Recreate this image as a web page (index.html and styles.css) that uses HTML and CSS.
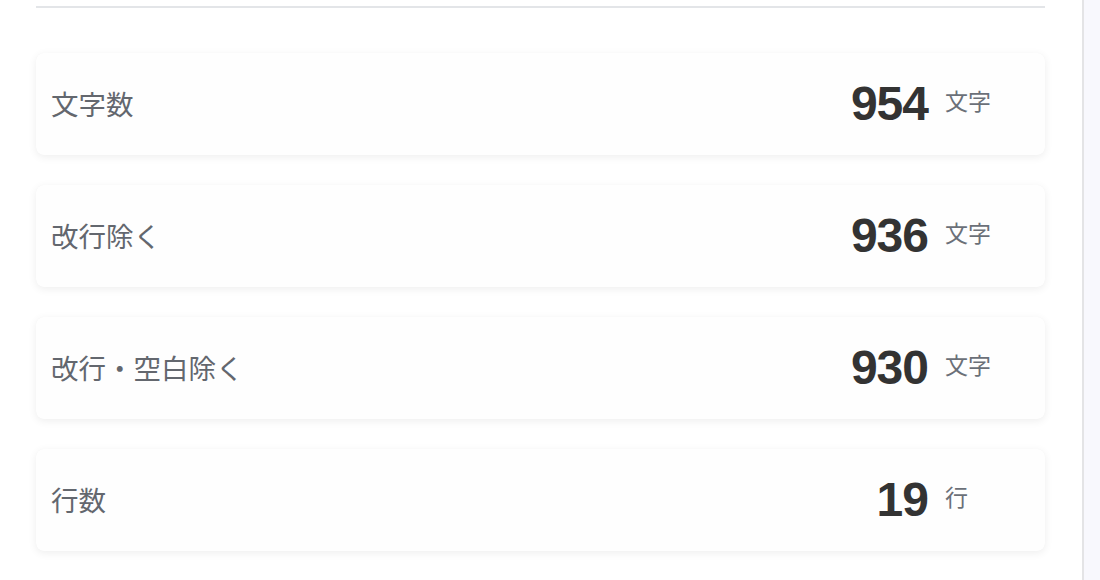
FILE: index.html
```html
<!DOCTYPE html>
<html lang="ja">
<head>
<meta charset="utf-8">
<link rel="stylesheet" href="styles.css">
</head>
<body>
<div class="layout">
  <main class="main">
    <div class="rule"></div>
    <div class="stats">
      <div class="card">
        <span class="label">文字数</span>
        <span class="value">954</span>
        <span class="unit">文字</span>
      </div>
      <div class="card">
        <span class="label">改行除く</span>
        <span class="value">936</span>
        <span class="unit">文字</span>
      </div>
      <div class="card">
        <span class="label">改行・空白除く</span>
        <span class="value">930</span>
        <span class="unit">文字</span>
      </div>
      <div class="card">
        <span class="label">行数</span>
        <span class="value">19</span>
        <span class="unit">行</span>
      </div>
    </div>
  </main>
  <aside class="side"></aside>
</div>
</body>
</html>
```
FILE: styles.css
```css
html, body {
  margin: 0;
  padding: 0;
  background: #ffffff;
  height: 100%;
}
body {
  font-family: "Noto Sans CJK JP", "Noto Sans", sans-serif;
  overflow: hidden;
}
.layout {
  display: flex;
  width: 1100px;
  height: 580px;
}
.main {
  width: 1084px;
  box-sizing: border-box;
  padding: 6px 37px 0 36px;
  border-right: 2px solid #e4e4e6;
  flex: none;
}
.side {
  flex: 1;
  background: #f8f8fd;
}
.rule {
  height: 2px;
  background: #e3e5e8;
}
.stats {
  margin-top: 45px;
  display: flex;
  flex-direction: column;
  gap: 30px;
}
.card {
  height: 102px;
  box-sizing: border-box;
  background: #fefefe;
  border-radius: 8px;
  box-shadow: 0 2px 8px rgba(0, 0, 0, 0.07), 0 0 1px rgba(0, 0, 0, 0.03);
  display: flex;
  align-items: center;
  padding: 0 16px 0 15px;
}
.label {
  flex: 1;
  font-size: 27.5px;
  color: #63676e;
  line-height: 1;
}
.value {
  font-family: "Liberation Sans", Arial, sans-serif;
  font-weight: 700;
  font-size: 48px;
  letter-spacing: -1px;
  color: #333333;
  line-height: 1;
}
.unit {
  width: 101px;
  box-sizing: border-box;
  padding-left: 17px;
  font-size: 23px;
  color: #6b7078;
  line-height: 1;
  margin-top: -8px;
}
```
